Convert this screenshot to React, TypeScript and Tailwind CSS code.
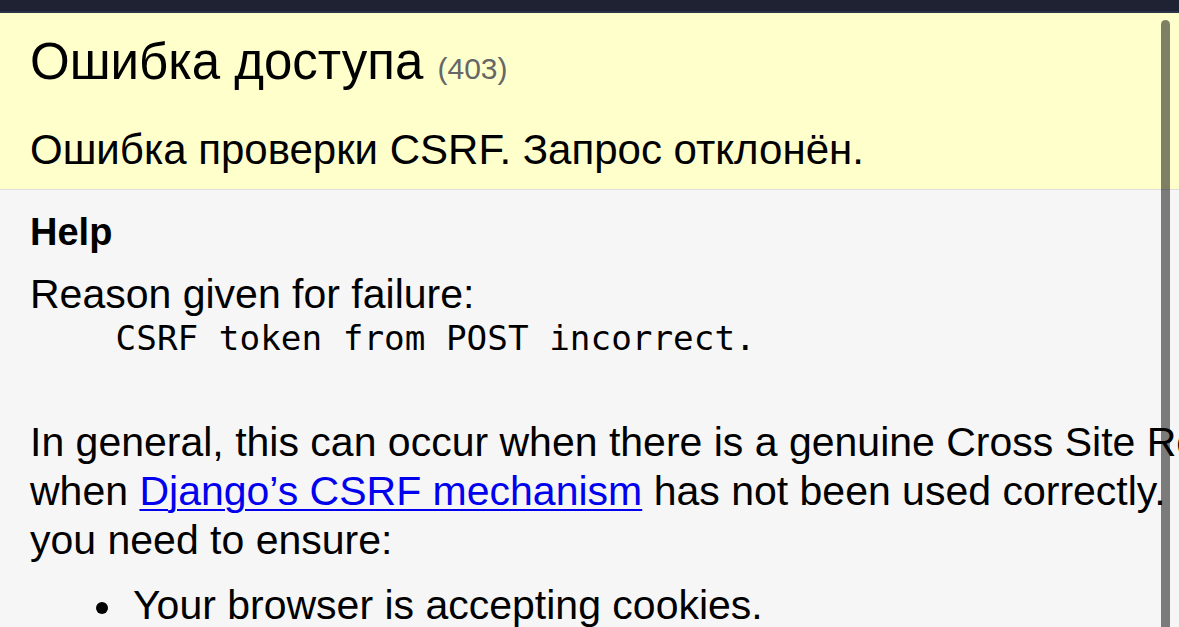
import React from "react";

export default function App() {
  return (
    <div
      className="relative w-[1179px] h-[627px] overflow-hidden bg-[#f6f6f6] text-black"
      style={{ fontFamily: '"Liberation Sans", Arial, sans-serif' }}
    >
      <div className="h-[11px] bg-[#1e2233]" />
      <div className="h-[2px] bg-[#2c3247]" />

      <div className="bg-[#ffffcc] border-b border-[#dddddd] px-[30px] pt-[20px] pb-[15px] whitespace-nowrap">
        <h1 className="text-[51px] leading-[58px] font-normal">
          Ошибка доступа <span className="text-[30px] leading-none text-[#666666]">(403)</span>
        </h1>
        <p className="mt-[35px] text-[42px] leading-[48px]">
          Ошибка проверки CSRF. Запрос отклонён.
        </p>
      </div>

      <div className="px-[30px] pt-[20px] whitespace-nowrap">
        <h2 className="text-[38px] leading-[44px] font-bold">Help</h2>
        <p className="mt-[17px] text-[41px] leading-[47px]">Reason given for failure:</p>
        <pre
          className="ml-[3px] text-[34.3px] leading-[40px] whitespace-pre"
          style={{ fontFamily: '"DejaVu Sans Mono", "Liberation Mono", monospace' }}
        >
          {"    CSRF token from POST incorrect."}
        </pre>
        <p className="mt-[60px] text-[41px] leading-[49px]">
          In general, this can occur when there is a genuine Cross Site Request Forgery, or
          <br />
          when{" "}
          <a href="#" className="text-[#0000ee] underline decoration-[2px] underline-offset-[4px]">
            Django’s CSRF mechanism
          </a>{" "}
          has not been used correctly. For POST forms,
          <br />
          you need to ensure:
        </p>
        <div className="mt-[16px] flex items-start text-[41px] leading-[49px]">
          <span className="ml-[66px] mt-[21px] w-[12px] h-[12px] rounded-full bg-black shrink-0" />
          <span className="ml-[25px]">Your browser is accepting cookies.</span>
        </div>
      </div>

      <div className="absolute right-[9px] top-[20px] w-[9px] h-[700px] rounded-full bg-black/50" />
    </div>
  );
}
